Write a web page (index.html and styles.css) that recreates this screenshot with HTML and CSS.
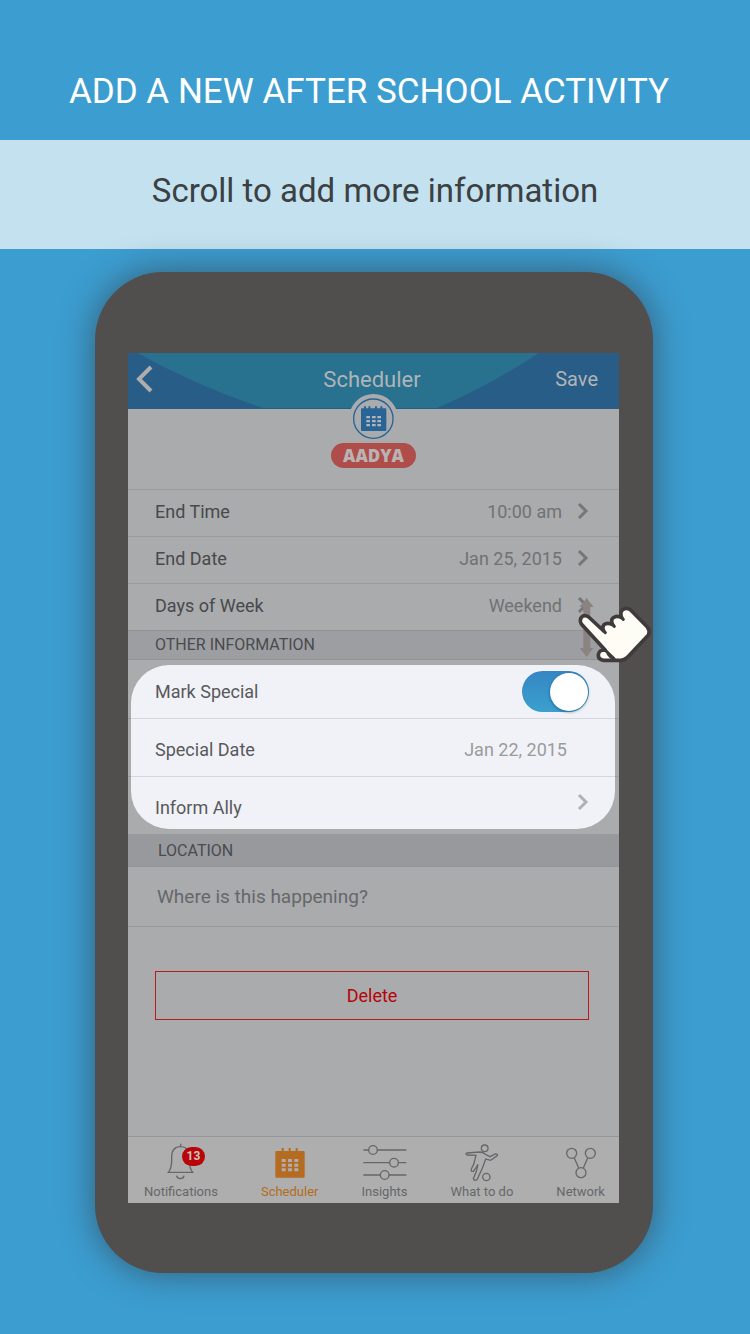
FILE: index.html
```html
<!DOCTYPE html>
<html lang="en">
<head>
<meta charset="utf-8">
<meta name="viewport" content="width=device-width, initial-scale=1">
<title>Add a new after school activity</title>
<link rel="stylesheet" href="styles.css">
</head>
<body>
<main class="page">
  <h1 class="title">ADD A NEW AFTER SCHOOL ACTIVITY</h1>
  <p class="banner">Scroll to add more information</p>

  <div class="phone">
    <div class="screen">
      <header class="appbar">
        <svg class="appbar-curve" viewBox="0 0 491 56" preserveAspectRatio="none" aria-hidden="true"><path d="M9 0Q72 35 135 56H309Q360 34 411 0Z" fill="#28718f"/></svg>
        <button class="back" aria-label="Back"><svg width="18" height="28" viewBox="0 0 18 28"><path d="M15 2L3 14L15 26" fill="none" stroke="#adadad" stroke-width="4"/></svg></button>
        <h2 class="appbar-title">Scheduler</h2>
        <button class="save">Save</button>
      </header>

      <section class="profile">
        <div class="avatar">
          <svg width="49" height="49" viewBox="0 0 147 147" aria-hidden="true">
            <circle cx="73" cy="74" r="59" fill="none" stroke="#286596" stroke-width="4"/>
            <path d="M39 43H45V37H51V43H58V37H64V43H78V37H84V43H94V37H100V43H110Q112 43 112 46V108Q112 111 109 111H39Q36 111 36 108V46Q36 43 39 43Z" fill="#286596"/>
            <path d="M52 66h11v7H52zM69 66h11v7H69zM85 66h11v7H85zM52 78h11v7H52zM69 78h11v7H69zM85 78h11v7H85zM52 90h11v7H52zM69 90h11v7H69zM85 90h11v7H85z" fill="#b2b3b5"/>
          </svg>
        </div>
        <span class="name">AADYA</span>
      </section>

      <button class="row"><span class="row-label">End Time</span><span class="row-value">10:00 am</span><svg class="chevron" viewBox="0 0 12 18"><path d="M2 2L9 9L2 16"/></svg></button>
      <button class="row"><span class="row-label">End Date</span><span class="row-value">Jan 25, 2015</span><svg class="chevron" viewBox="0 0 12 18"><path d="M2 2L9 9L2 16"/></svg></button>
      <div class="row-wrap">
        <button class="row"><span class="row-label">Days of Week</span><span class="row-value">Weekend</span><svg class="chevron" viewBox="0 0 12 18"><path d="M2 2L9 9L2 16"/></svg></button>
        <svg class="gesture" viewBox="350 80 231 201" aria-hidden="true">
          <path d="M379 83L400 110H390V233H399L379 260L358 233H369V110H357Z" fill="#8b8380"/>
          <path d="M363 161Q357 149 363 141Q372 132 385 140L430 182Q424 171 431 163Q441 155 457 163Q450 149 459 142Q470 134 484 142Q478 127 486 119Q498 109 511 119L561 170Q570 181 565 193L500 262Q492 270 481 270H430Q413 268 414 253Q417 236 435 240Z" fill="#fdfcf5" stroke="#413a3c" stroke-width="11" stroke-linejoin="round"/>
          <path d="M430 182L435 187M457 163L462 168M484 142L489 147M428 233L463 267Q450 262 443 250" fill="none" stroke="#413a3c" stroke-width="9" stroke-linecap="round"/>
        </svg>
      </div>

      <h3 class="section">OTHER INFORMATION</h3>
      <div class="spotlight">
        <div class="row spot-row"><label class="row-label" for="special">Mark Special</label><input class="switch" type="checkbox" id="special" checked></div>
        <div class="row spot-row"><span class="row-label">Special Date</span><span class="row-value spot-date">Jan 22, 2015</span></div>
        <button class="row spot-row"><span class="row-label">Inform Ally</span><svg class="chevron" viewBox="0 0 12 18"><path d="M2 2L9 9L2 16"/></svg></button>
      </div>

      <h3 class="section location">LOCATION</h3>
      <input class="place" type="text" aria-label="Location" placeholder="Where is this happening?">
      <button class="delete">Delete</button>

      <nav class="tabs">
        <button class="tab">
          <span class="bell"><svg width="30" height="40" viewBox="140 36 90 120"><path d="M184 41V50M147 127Q157 114 157 92V81Q157 50 184 50Q210 50 210 81V92Q210 114 220 127ZM172 137Q173 146 183 146Q193 146 194 137"/></svg><span class="count">13</span></span>
          Notifications
        </button>
        <button class="tab active">
          <svg width="30" height="40" viewBox="463 36 90 120"><path class="solid" d="M467 63H483V54H489V63H504V54H510V63H525V54H531V63H549Q552 63 552 66V140Q552 143 549 143H467Q464 143 464 140V66Q464 63 467 63Z"/><path class="holes" d="M483 87h12v9h-12zM502 87h12v9h-12zM521 87h12v9h-12zM483 101h12v9h-12zM502 101h12v9h-12zM521 101h12v9h-12zM483 115h12v9h-12zM502 115h12v9h-12zM521 115h12v9h-12z"/></svg>
          Scheduler
        </button>
        <button class="tab">
          <svg width="44" height="40" viewBox="40 36 132 120"><path d="M41 60H57M83 60H170M41 98H120M146 98H170M41 135H92M118 135H170"/><circle cx="70" cy="60" r="13"/><circle cx="133" cy="98" r="13"/><circle cx="105" cy="135" r="13"/></svg>
          Insights
        </button>
        <button class="tab">
          <svg width="36" height="40" viewBox="352 36 108 120"><circle cx="414" cy="55" r="10"/><circle cx="419" cy="141" r="11"/><path d="M360 69L400 66Q411 67 416 73L430 80L446 72Q454 71 452 77L432 91L417 87L407 115L391 149Q383 154 380 146L389 124L394 103L388 113L380 124Q372 126 374 117L381 103L388 76L361 75Q355 72 360 69Z"/></svg>
          What to do
        </button>
        <button class="tab">
          <svg width="32" height="40" viewBox="641 36 96 120"><path d="M669 84L682 114M709 84L696 114"/><circle cx="661" cy="70" r="15"/><circle cx="717" cy="70" r="15"/><circle cx="689" cy="128" r="15"/></svg>
          Network
        </button>
      </nav>
    </div>
  </div>
</main>
</body>
</html>
```
FILE: styles.css
```css
* { box-sizing: border-box; }

body {
  margin: 0;
  background: #3c9dd0;
  font-family: Roboto, "Liberation Sans", sans-serif;
}

h1, h2, h3, p { margin: 0; font-weight: 400; }

button {
  margin: 0;
  padding: 0;
  border: 0;
  background: none;
  font-family: inherit;
  text-align: left;
}

svg { display: block; }

.page {
  display: flex;
  flex-direction: column;
  min-height: 100vh;
}

.title {
  padding: 68px 12px 24px 0;
  color: #fff;
  font-size: 35px;
  line-height: 48px;
  text-align: center;
}

.banner {
  padding: 27px 0 34px;
  background: #c4e1ef;
  color: #3b4043;
  font-size: 33px;
  line-height: 48px;
  text-align: center;
}

.phone {
  display: flex;
  flex: 1;
  margin: 23px 97px 61px 95px;
  padding: 81px 34px 70px 33px;
  border-radius: 68px;
  background: #514e4e;
  box-shadow: 0 0 32px 2px rgba(48, 60, 70, 0.6);
}

.screen {
  display: flex;
  flex: 1;
  flex-direction: column;
  min-width: 0;
  background: #a9abad;
}

.appbar {
  position: relative;
  display: grid;
  grid-template-columns: 1fr auto 1fr;
  align-items: center;
  height: 56px;
  padding: 0 21px 3px 18px;
  border-bottom: 1px solid #285d87;
  background: #285d87;
}

.appbar-curve {
  position: absolute;
  inset: 0;
  width: 100%;
  height: 100%;
}

.back, .appbar-title, .save { position: relative; color: #b0b4b7; }

.back { margin-left: -10px; }

.appbar-title { font-size: 22px; }

.save { justify-self: end; font-size: 20px; }

.profile {
  display: flex;
  flex-direction: column;
  align-items: center;
  height: 80px;
}

.avatar {
  position: relative;
  margin-top: -15px;
  border-radius: 50%;
  background: #a9abad;
}

.name {
  position: relative;
  padding: 0 12px;
  border-radius: 13px;
  background: #af4d4b;
  color: #b9b3b4;
  font-family: "Open Sans", sans-serif;
  font-size: 17px;
  font-weight: 800;
  line-height: 25px;
}

.row-wrap { position: relative; }

.row {
  display: flex;
  align-items: center;
  width: 100%;
  height: 47px;
  padding: 0 30px 4px 27px;
  border-top: 1px solid #999b9e;
  color: #48494b;
  font-size: 18px;
}

.row-label { flex: 1; }

.row-value { color: #717274; }

.chevron {
  width: 12px;
  height: 18px;
  margin-left: 15px;
  fill: none;
  stroke: #757678;
  stroke-width: 3;
}

.gesture {
  position: absolute;
  top: 14px;
  right: -35px;
  z-index: 2;
  width: 77px;
  height: 67px;
}

.section {
  height: 30px;
  padding-left: 27px;
  border-top: 1px solid #919397;
  border-bottom: 1px solid #919397;
  background: #9d9ea2;
  color: #4a4b4d;
  font-size: 16px;
  line-height: 28px;
}

.spotlight {
  position: relative;
  z-index: 0;
}

.spotlight::before {
  content: "";
  position: absolute;
  inset: 5px 4px 5px 3px;
  z-index: -1;
  border-radius: 38px;
  background: #f1f2f7;
}

.spot-row {
  height: 58px;
  padding-top: 4px;
  padding-bottom: 0;
  border-color: rgba(90, 95, 105, 0.18);
  color: #58595b;
}

.spot-row:first-child { border-color: transparent; }

.spot-row .chevron {
  align-self: flex-start;
  margin-top: 12px;
  stroke: #b0b1b4;
}

.spot-date { margin-right: 22px; color: #9a9b9d; }

.switch {
  display: flex;
  justify-content: flex-end;
  align-items: center;
  appearance: none;
  width: 67px;
  height: 41px;
  margin: 0;
  border-radius: 21px;
  background: linear-gradient(#3586c2, #3ba0cf);
}

.switch::before {
  content: "";
  width: 38px;
  height: 38px;
  margin-right: 1px;
  border-radius: 50%;
  background: #fff;
  box-shadow: 0 1px 3px rgba(0, 60, 100, 0.6);
}

.location {
  height: 33px;
  padding-left: 30px;
  border-top-color: #9a9b9f;
  background: #98999d;
  line-height: 31px;
}

.place {
  width: 100%;
  height: 60px;
  padding: 0 29px;
  border: 0;
  border-bottom: 1px solid #979a9c;
  border-radius: 0;
  background: none;
  color: #424345;
  font-family: inherit;
  font-size: 19px;
}

.place::placeholder { color: #66676a; opacity: 1; }

.delete {
  height: 49px;
  margin: 44px 30px 24px 27px;
  border: 1px solid #bd1a1c;
  color: #b80407;
  font-size: 18px;
  text-align: center;
}

.tabs {
  display: flex;
  justify-content: space-between;
  height: 67px;
  margin-top: auto;
  padding: 5px 14px 0 16px;
  border-top: 1px solid #949699;
  background: #aeaeae;
}

.tab {
  display: flex;
  flex-direction: column;
  align-items: center;
  color: #66676a;
  font-size: 13px;
  line-height: 20px;
}

.tab svg { fill: none; stroke: #66676a; stroke-width: 4; }

.active { color: #b56b20; }

.tab .solid { fill: #b56b20; stroke: none; }

.tab .holes { fill: #aeaeae; stroke: none; }

.bell { position: relative; }

.count {
  position: absolute;
  top: 5px;
  left: 16px;
  width: 23px;
  border-radius: 10px;
  background: #b90508;
  color: #c9c4c4;
  font-size: 12px;
  font-weight: 700;
  line-height: 19px;
  text-align: center;
}
```
